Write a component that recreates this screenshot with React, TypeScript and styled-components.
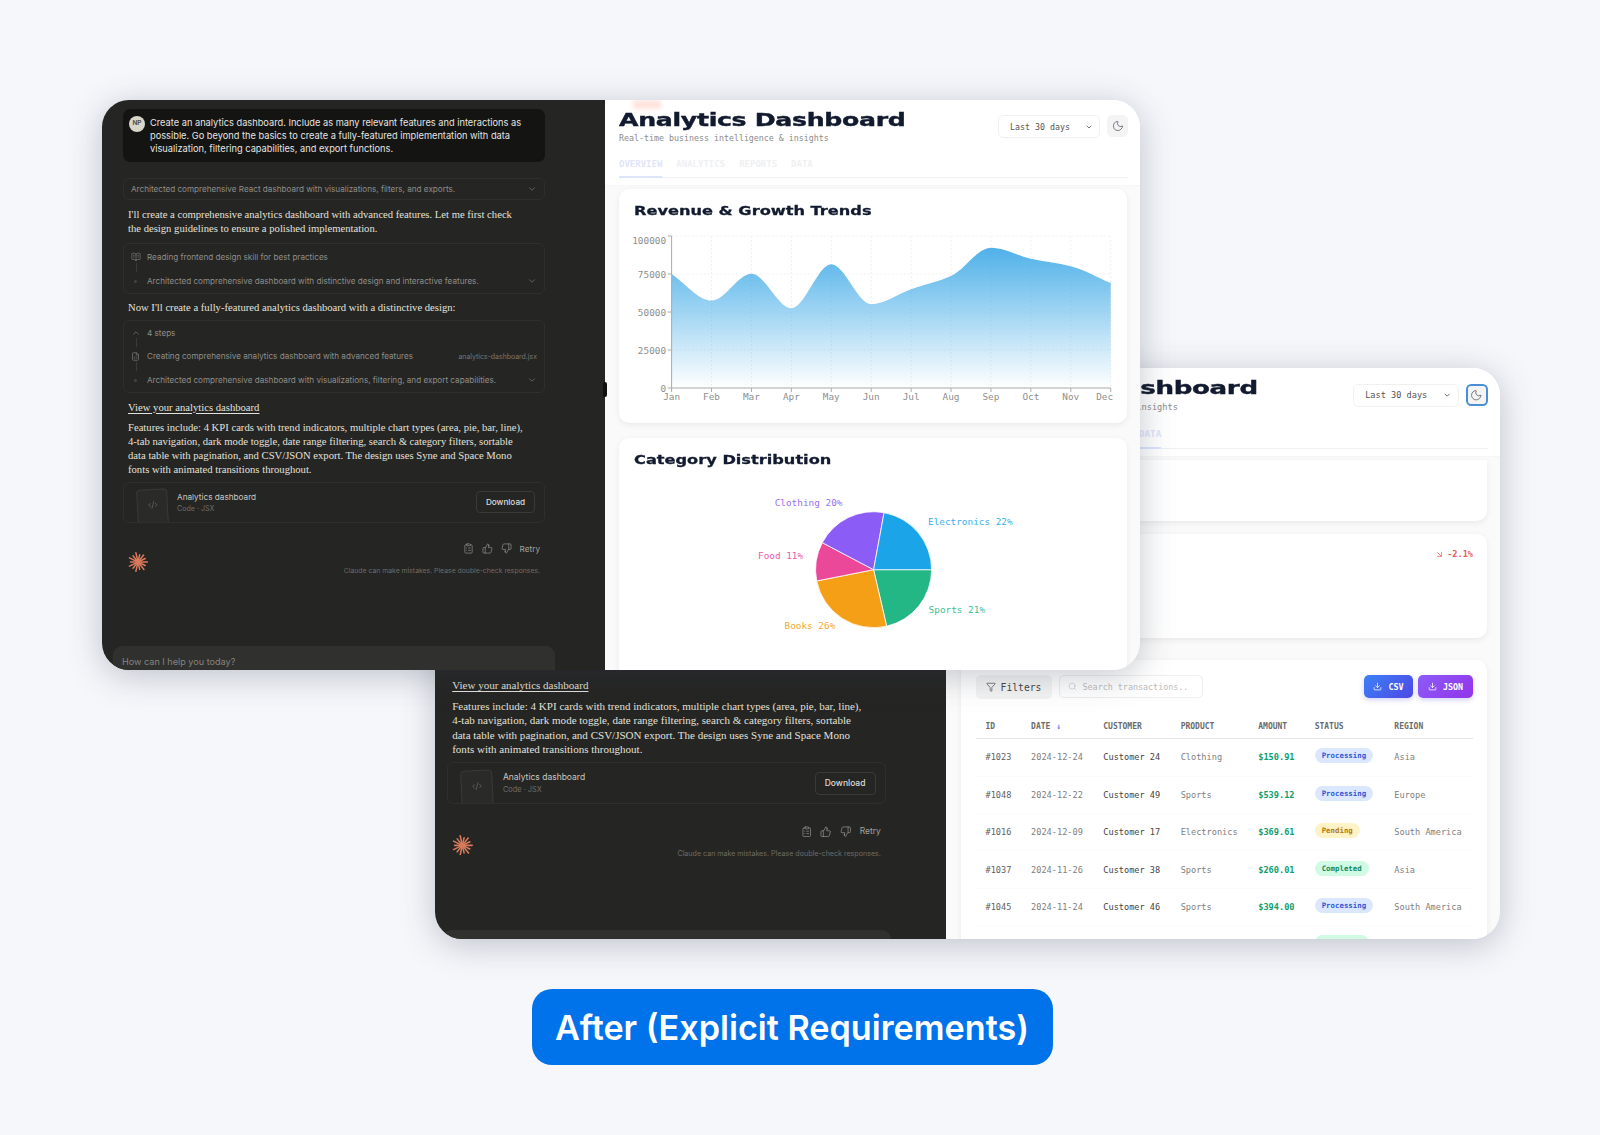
import React from 'react';
import styled, { createGlobalStyle } from 'styled-components';
import {
  ArrowDownRight,
  BookOpenText,
  ChevronDown,
  ChevronUp,
  ClipboardList,
  CodeXml,
  Download,
  FileCode,
  Filter,
  Moon,
  Search,
  ThumbsDown,
  ThumbsUp
} from 'lucide-react';

const SANS = `Inter, "Noto Sans", sans-serif`;
const SERIF = `"Liberation Serif", serif`;
const MONO = `"DejaVu Sans Mono", "Liberation Mono", monospace`;
const WIDE = `"DejaVu Sans", sans-serif`;

const GlobalStyle = createGlobalStyle`
  html, body {
    margin: 0;
    padding: 0;
    background: #f5f7fb;
  }
`;

const MONTHS = ['Jan', 'Feb', 'Mar', 'Apr', 'May', 'Jun', 'Jul', 'Aug', 'Sep', 'Oct', 'Nov', 'Dec'];
const REVENUE = [75000, 57500, 75200, 52500, 81400, 55100, 65000, 73700, 92300, 85000, 80100, 69000];
const CHART = { left: 52.6, right: 491.7, top: 11, bottom: 163 };

// same curve the chart lib draws (monotone in x)
const monotonePath = (pts: [number, number][]) => {
  const n = pts.length;
  const slopes: number[] = [];
  for (let i = 0; i < n - 1; i++) {
    slopes.push((pts[i + 1][1] - pts[i][1]) / (pts[i + 1][0] - pts[i][0]));
  }
  const tangents = pts.map((_, i) => {
    if (i === 0) return slopes[0];
    if (i === n - 1) return slopes[n - 2];
    if (slopes[i - 1] * slopes[i] <= 0) return 0;
    return (2 * slopes[i - 1] * slopes[i]) / (slopes[i - 1] + slopes[i]);
  });
  let d = `M${pts[0][0]},${pts[0][1]}`;
  for (let i = 0; i < n - 1; i++) {
    const h = (pts[i + 1][0] - pts[i][0]) / 3;
    d += `C${pts[i][0] + h},${pts[i][1] + tangents[i] * h} ${pts[i + 1][0] - h},${
      pts[i + 1][1] - tangents[i + 1] * h
    } ${pts[i + 1][0]},${pts[i + 1][1]}`;
  }
  return d;
};

const SLICES = [
  { from: 0, to: 77, color: '#22b784' },
  { from: 77, to: 168.8, color: '#f59f17' },
  { from: 168.8, to: 207.8, color: '#ec4899' },
  { from: 207.8, to: 280.4, color: '#8b5cf6' },
  { from: 280.4, to: 360, color: '#1ba4e8' }
];

const PIE_LABELS = [
  { text: 'Clothing 20%', x: 155.7, y: 38, color: '#9a70f5' },
  { text: 'Electronics 22%', x: 309, y: 57, color: '#3bb0ea' },
  { text: 'Food 11%', x: 139, y: 91, color: '#ec5ba6' },
  { text: 'Sports 21%', x: 309.6, y: 145, color: '#3cc194' },
  { text: 'Books 26%', x: 165.5, y: 161, color: '#f5a92f' }
];

const ROWS = [
  ['#1023', '2024-12-24', 'Customer 24', 'Clothing', '$150.91', 'Processing', 'Asia'],
  ['#1048', '2024-12-22', 'Customer 49', 'Sports', '$539.12', 'Processing', 'Europe'],
  ['#1016', '2024-12-09', 'Customer 17', 'Electronics', '$369.61', 'Pending', 'South America'],
  ['#1037', '2024-11-26', 'Customer 38', 'Sports', '$260.01', 'Completed', 'Asia'],
  ['#1045', '2024-11-24', 'Customer 46', 'Sports', '$394.00', 'Processing', 'South America'],
  ['#1029', '2024-11-20', 'Customer 30', 'Food', '$212.40', 'Completed', 'Europe']
];

const STAR_RAYS = [9.5, 8, 9.5, 7.5, 9.5, 8, 9.5, 7.5, 9.5, 8, 9.5, 7.5, 9, 8];

const Stage = styled.div`
  position: relative;
  width: 1600px;
  height: 1135px;
  overflow: hidden;
  padding: 989px 16px 0 0;
  box-sizing: border-box;
  display: flex;
  justify-content: center;
  align-items: flex-start;
`;

const Badge = styled.div`
  width: 521px;
  height: 76px;
  border-radius: 20px;
  background: #0073ea;
  color: #fff;
  font-family: ${SANS};
  font-weight: 600;
  font-size: 34.2px;
  display: flex;
  align-items: center;
  justify-content: center;
`;

const Window = styled.div<{ $x: number; $y: number; $w: number; $h: number; $split: number }>`
  position: absolute;
  left: ${p => p.$x}px;
  top: ${p => p.$y}px;
  width: ${p => p.$w}px;
  height: ${p => p.$h}px;
  display: grid;
  grid-template-columns: ${p => p.$split}px 1fr;
  border-radius: 27px;
  overflow: hidden;
  background: #fafafa;
  box-shadow: 0 6px 34px rgba(50, 58, 78, 0.28);
`;

const ChatPane = styled.div<{ $pad: string }>`
  background: #252523;
  padding: ${p => p.$pad};
  display: flex;
  flex-direction: column;
  overflow: hidden;
  min-height: 0;
  font-family: ${SANS};
`;

const Bubble = styled.div`
  height: 53px;
  box-sizing: border-box;
  padding: 7px 8px 0 6px;
  background: #141413;
  border-radius: 7px;
  display: flex;
  gap: 5px;
  color: #e6e5e0;
  font-size: 9.25px;
  line-height: 13.2px;
  white-space: nowrap;
`;

const Avatar = styled.div`
  width: 16px;
  height: 16px;
  flex: none;
  border-radius: 50%;
  background: #d9d6c9;
  color: #55534c;
  font-size: 6.5px;
  font-weight: 700;
  display: flex;
  align-items: center;
  justify-content: center;
`;

const Outline = styled.div<{ $mt: number }>`
  margin-top: ${p => p.$mt}px;
  flex: none;
  border: 1px solid #2f2f2d;
  border-radius: 6px;
  box-sizing: border-box;
  color: #8f8e89;
  font-size: 8.15px;
`;

const SummaryRow = styled.div`
  height: 20px;
  padding: 0 7px 0 7px;
  display: flex;
  align-items: center;
  justify-content: space-between;
`;

const ToolRow = styled.div<{ $h: number; $rail?: boolean }>`
  position: relative;
  height: ${p => p.$h}px;
  padding: 0 7px 0 7px;
  display: grid;
  grid-template-columns: 16px 1fr auto;
  align-items: center;
  white-space: nowrap;
  ${p =>
    p.$rail &&
    `&::before {
      content: '';
      position: absolute;
      left: 11.5px;
      top: -6px;
      height: 9px;
      width: 1px;
      background: #3b3b39;
    }`}
`;

const Dot = styled.span`
  width: 3px;
  height: 3px;
  margin-left: 3px;
  border-radius: 50%;
  background: #444441;
`;

const FileName = styled.span`
  font-size: 6.95px;
  color: #77766f;
`;

const Prose = styled.div<{ $mt: number }>`
  margin-top: ${p => p.$mt}px;
  flex: none;
  padding-left: 5px;
  font-family: ${SERIF};
  font-size: 10.65px;
  line-height: 14px;
  color: #e2e1dc;
  white-space: nowrap;
`;

const ViewLink = styled(Prose)`
  text-decoration: underline;
  text-underline-offset: 2px;
`;

const Tail = styled.div<{ $scale: number; $mt: number }>`
  zoom: ${p => p.$scale};
  margin-top: ${p => p.$mt}px;
  flex: none;
`;

const Artifact = styled(Outline)`
  height: 41px;
  padding: 0 9px 0 13px;
  display: flex;
  align-items: center;
  overflow: hidden;
`;

const Tile = styled.div`
  width: 31px;
  height: 38px;
  margin: 12px 9px 0 0;
  flex: none;
  border: 1px solid #3a3a38;
  border-radius: 4px;
  background: #2a2a28;
  transform: rotate(-3deg);
  color: #77766f;
  display: flex;
  justify-content: center;
  padding-top: 10px;
  box-sizing: border-box;
`;

const ArtifactName = styled.div`
  color: #c9c8c2;
  font-size: 8.2px;
  line-height: 12px;
`;

const ArtifactKind = styled.div`
  color: #6f6e69;
  font-size: 7.1px;
  line-height: 11px;
`;

const DownloadButton = styled.div`
  margin-left: auto;
  width: 59px;
  height: 22px;
  border: 1px solid #3a3a38;
  border-radius: 4px;
  box-sizing: border-box;
  color: #dedcd6;
  font-size: 8.2px;
  font-weight: 500;
  display: flex;
  align-items: center;
  justify-content: center;
`;

const Foot = styled.div`
  margin-top: 20px;
  display: flex;
  justify-content: space-between;
  padding: 0 5px;
`;

const Spark = styled.svg`
  margin-top: 9px;
  flex: none;
`;

const FootRight = styled.div`
  display: flex;
  flex-direction: column;
  align-items: flex-end;
`;

const Actions = styled.div`
  height: 12px;
  display: flex;
  align-items: center;
  gap: 8px;
  color: #a3a29c;
  font-size: 8.2px;
`;

const Disclaimer = styled.div`
  margin-top: 11px;
  line-height: 10px;
  font-size: 6.85px;
  color: #6d6c67;
`;

const Composer = styled.div<{ $h: number; $mx: number }>`
  margin: auto -${p => p.$mx}px 0 -${p => p.$mx}px;
  height: ${p => p.$h}px;
  flex: none;
  overflow: hidden;
  box-sizing: border-box;
  padding: 9px 0 0 9px;
  background: #30302e;
  border-radius: 9px 9px 0 0;
  color: #85847e;
  font-size: 9.1px;
  line-height: 14px;
`;

const MainPane = styled.div`
  position: relative;
  display: flex;
  flex-direction: column;
  min-width: 0;
  overflow: hidden;
`;

const Smudge = styled.div`
  position: absolute;
  left: 28px;
  top: 0;
  width: 28px;
  height: 9px;
  background: #ffe4dd;
  filter: blur(2px);
`;

const Handle = styled.div`
  position: absolute;
  left: 501px;
  top: 282px;
  width: 4px;
  height: 15px;
  border-radius: 2px;
  background: #111;
`;

const Header = styled.header<{ $scale: number }>`
  zoom: ${p => p.$scale};
  height: 86px;
  flex: none;
  box-sizing: border-box;
  padding: 10px 12px 0 14px;
  background: #fff;
  border-bottom: 1px solid #f6f6f6;
`;

const HeaderTop = styled.div`
  display: flex;
  justify-content: space-between;
  align-items: flex-start;
`;

const Title = styled.h1`
  margin: 0;
  font-family: ${WIDE};
  font-weight: 700;
  font-size: 17px;
  line-height: 20px;
  letter-spacing: -0.2px;
  color: #111a2e;
  white-space: nowrap;
  transform: scaleX(1.48);
  transform-origin: left center;
  -webkit-text-stroke: 0.4px #111a2e;
`;

const Subtitle = styled.div`
  margin-top: 2px;
  font-family: ${MONO};
  font-size: 8.3px;
  line-height: 12px;
  color: #8b8b8b;
  white-space: nowrap;
`;

const Controls = styled.div`
  margin-top: 5px;
  display: flex;
  gap: 7px;
`;

const RangeSelect = styled.div`
  width: 102px;
  height: 23px;
  box-sizing: border-box;
  padding: 0 6px 0 11px;
  border: 1px solid #f0f0f0;
  border-radius: 5px;
  display: flex;
  align-items: center;
  justify-content: space-between;
  font-family: ${MONO};
  font-size: 8.3px;
  color: #555;
`;

const ThemeToggle = styled.div<{ $focused?: boolean }>`
  width: 21px;
  height: 22px;
  box-sizing: border-box;
  border-radius: 5px;
  background: #f4f4f5;
  border: ${p => (p.$focused ? '2px solid #4a8fd6' : '1px solid #f4f4f5')};
  color: #555a66;
  display: flex;
  align-items: center;
  justify-content: center;
`;

const Tabs = styled.nav`
  margin-top: 14px;
  display: flex;
  gap: 14px;
  border-bottom: 1px solid #eeeff2;
`;

const Tab = styled.div<{ $active?: boolean }>`
  height: 20px;
  font-family: ${MONO};
  font-weight: 700;
  font-size: 9px;
  line-height: 12px;
  color: ${p => (p.$active ? '#dfe5fb' : '#eff0f2')};
  box-sizing: border-box;
  border-bottom: ${p => (p.$active ? '2px solid #dde5fb' : '2px solid transparent')};
  margin-bottom: -1px;
`;

const Body = styled.div<{ $left: number }>`
  padding: 3px 13px 0 ${p => p.$left}px;
  display: flex;
  flex-direction: column;
  min-height: 0;
`;

const Card = styled.section<{ $mt?: number; $h?: number; $flat?: boolean }>`
  margin-top: ${p => p.$mt ?? 0}px;
  height: ${p => (p.$h ? `${p.$h}px` : 'auto')};
  flex: none;
  box-sizing: border-box;
  background: #fff;
  border-radius: ${p => (p.$flat ? '0 0 10px 10px' : '10px')};
  box-shadow: 0 2px 6px rgba(0, 0, 0, 0.07);
`;

const ChartCard = styled(Card)`
  padding: 14px 0 13px 15px;
`;

const CardTitle = styled.h2`
  margin: 0;
  font-family: ${WIDE};
  font-weight: 700;
  font-size: 13px;
  line-height: 16px;
  color: #111a2e;
  white-space: nowrap;
  transform: scaleX(1.245);
  transform-origin: left center;
  -webkit-text-stroke: 0.3px #111a2e;
`;

const Plot = styled.svg<{ $mt: number }>`
  display: block;
  margin: ${p => p.$mt}px 0 0 -15px;
  font-family: ${MONO};
  font-size: 9.4px;
`;

const TrendCard = styled(Card)`
  padding: 15px 14px 0 0;
  display: flex;
  justify-content: flex-end;
`;

const Trend = styled.div`
  display: flex;
  align-items: center;
  gap: 3px;
  height: 10px;
  font-family: ${MONO};
  font-weight: 700;
  font-size: 8.6px;
  color: #ea5a5a;
`;

const TableCard = styled(Card)`
  padding: 15px 14px 0 15px;
  font-family: ${MONO};
`;

const Toolbar = styled.div`
  display: flex;
  align-items: flex-start;
  gap: 7px;
`;

const FilterButton = styled.div`
  width: 76px;
  height: 24px;
  border-radius: 5px;
  background: #f4f4f4;
  display: flex;
  align-items: center;
  justify-content: center;
  gap: 5px;
  font-size: 9.7px;
  color: #444;
`;

const SearchBox = styled.div`
  width: 144px;
  height: 23px;
  box-sizing: border-box;
  border: 1px solid #eee;
  border-radius: 5px;
  padding-left: 8px;
  display: flex;
  align-items: center;
  gap: 6px;
  font-size: 8.4px;
  color: #bdbdbd;
  white-space: nowrap;
`;

const ExportGroup = styled.div`
  margin-left: auto;
  display: flex;
  gap: 5px;
`;

const ExportButton = styled.div<{ $from: string; $to: string; $w: number }>`
  width: ${p => p.$w}px;
  height: 23px;
  border-radius: 5px;
  background: linear-gradient(135deg, ${p => p.$from}, ${p => p.$to});
  box-shadow: 0 2px 5px rgba(80, 70, 220, 0.25);
  color: #fff;
  font-size: 8.4px;
  font-weight: 700;
  display: flex;
  align-items: center;
  justify-content: center;
  gap: 6px;
`;

const TableHead = styled.div`
  margin-top: 17px;
  height: 23px;
  box-sizing: border-box;
  padding: 0 0 1px 10px;
  display: grid;
  grid-template-columns: 45.6px 72.2px 77.4px 77.6px 56.4px 79.7px 1fr;
  align-items: center;
  border-bottom: 1px solid #e6e6e6;
  font-weight: 700;
  font-size: 8px;
  color: #6b6b6b;
`;

const SortMark = styled.span`
  margin-left: 6px;
  color: #4a7de8;
`;

const TableRow = styled.div`
  height: 37.4px;
  box-sizing: border-box;
  padding-left: 10px;
  display: grid;
  grid-template-columns: 45.6px 72.2px 77.4px 77.6px 56.4px 79.7px 1fr;
  align-items: center;
  border-bottom: 1px solid #fbfbfb;
  font-size: 8.6px;
  color: #808080;
  white-space: nowrap;
`;

const CellStrong = styled.div`
  color: #444;
`;

const CellId = styled.div`
  color: #5e5e5e;
`;

const CellAmount = styled.div`
  color: #0f9f6e;
  font-weight: 700;
`;

const STATUS: Record<string, { bg: string; fg: string }> = {
  Processing: { bg: '#dbe7fe', fg: '#3159d6' },
  Pending: { bg: '#fef3c7', fg: '#b47a10' },
  Completed: { bg: '#d1fae5', fg: '#0f8a5f' }
};

const Status = styled.span<{ $kind: string }>`
  justify-self: start;
  margin-top: -3px;
  height: 15px;
  padding: 0 7px;
  border-radius: 8px;
  background: ${p => STATUS[p.$kind].bg};
  color: ${p => STATUS[p.$kind].fg};
  font-size: 7.4px;
  font-weight: 700;
  line-height: 15px;
`;

const Sparkle = () => (
  <Spark width="20" height="20" viewBox="-10 -10 20 20">
    {STAR_RAYS.map((len, i) => {
      const a = (i / STAR_RAYS.length) * Math.PI * 2;
      return (
        <line
          key={i}
          x1="0"
          y1="0"
          x2={Math.cos(a) * len}
          y2={Math.sin(a) * len}
          stroke="#d97a5c"
          strokeWidth="1.5"
          strokeLinecap="round"
        />
      );
    })}
  </Spark>
);

const ChatEnd = ({ scale, top }: { scale: number; top: number }) => (
  <Tail $scale={scale} $mt={top}>
    <ViewLink $mt={0}>View your analytics dashboard</ViewLink>
    <Prose $mt={6}>
      Features include: 4 KPI cards with trend indicators, multiple chart types (area, pie, bar, line),
      <br />
      4-tab navigation, dark mode toggle, date range filtering, search &amp; category filters, sortable
      <br />
      data table with pagination, and CSV/JSON export. The design uses Syne and Space Mono
      <br />
      fonts with animated transitions throughout.
    </Prose>
    <Artifact $mt={5}>
      <Tile>
        <CodeXml size={10} strokeWidth={1.4} />
      </Tile>
      <div>
        <ArtifactName>Analytics dashboard</ArtifactName>
        <ArtifactKind>Code · JSX</ArtifactKind>
      </div>
      <DownloadButton>Download</DownloadButton>
    </Artifact>
    <Foot>
      <Sparkle />
      <FootRight>
        <Actions>
          <ClipboardList size={11} strokeWidth={1.3} />
          <ThumbsUp size={11} strokeWidth={1.3} />
          <ThumbsDown size={11} strokeWidth={1.3} />
          <span>Retry</span>
        </Actions>
        <Disclaimer>Claude can make mistakes. Please double-check responses.</Disclaimer>
      </FootRight>
    </Foot>
  </Tail>
);

const DashboardHeader = ({ scale, focused }: { scale: number; focused?: boolean }) => (
  <Header $scale={scale}>
    <HeaderTop>
      <div>
        <Title>Analytics Dashboard</Title>
        <Subtitle>Real-time business intelligence &amp; insights</Subtitle>
      </div>
      <Controls>
        <RangeSelect>
          Last 30 days
          <ChevronDown size={8} strokeWidth={2.4} />
        </RangeSelect>
        <ThemeToggle $focused={focused}>
          <Moon size={12} strokeWidth={1.5} />
        </ThemeToggle>
      </Controls>
    </HeaderTop>
    <Tabs>
      <Tab $active>OVERVIEW</Tab>
      <Tab>ANALYTICS</Tab>
      <Tab>REPORTS</Tab>
      <Tab $active={focused}>DATA</Tab>
    </Tabs>
  </Header>
);

const RevenueChart = () => {
  const step = (CHART.right - CHART.left) / 11;
  const scaleY = (v: number) => CHART.bottom - (v / 100000) * (CHART.bottom - CHART.top);
  const pts = REVENUE.map((v, i): [number, number] => [CHART.left + i * step, scaleY(v)]);
  const line = monotonePath(pts);
  const ticks = [100000, 75000, 50000, 25000, 0];
  return (
    <Plot $mt={6} width="508" height="185" viewBox="0 0 508 185">
      <defs>
        <linearGradient id="revenueFill" x1="0" y1="0" x2="0" y2="1">
          <stop offset="0" stopColor="#37a6e6" stopOpacity="0.88" />
          <stop offset="1" stopColor="#37a6e6" stopOpacity="0" />
        </linearGradient>
      </defs>
      {ticks.map(t => (
        <line key={t} x1={CHART.left} x2={CHART.right} y1={scaleY(t)} y2={scaleY(t)} stroke="#f0f0f0" strokeDasharray="2 2" />
      ))}
      {pts.map(([x], i) => (
        <line key={i} x1={x} x2={x} y1={CHART.top} y2={CHART.bottom} stroke="#f0f0f0" strokeDasharray="2 2" />
      ))}
      <path d={`${line}L${CHART.right},${CHART.bottom}L${CHART.left},${CHART.bottom}Z`} fill="url(#revenueFill)" />
      <path
        d={`M${CHART.left},${CHART.top}V${CHART.bottom}H${CHART.right}`}
        fill="none"
        stroke="#ababab"
      />
      {ticks.map(t => (
        <g key={t}>
          <line x1={CHART.left - 4} x2={CHART.left} y1={scaleY(t)} y2={scaleY(t)} stroke="#ababab" />
          <text x={CHART.left - 5.5} y={t === 100000 ? scaleY(t) + 8 : scaleY(t) + 3.5} textAnchor="end" fill="#8e8e8e">
            {t}
          </text>
        </g>
      ))}
      {MONTHS.map((m, i) => (
        <g key={m}>
          <line x1={pts[i][0]} x2={pts[i][0]} y1={CHART.bottom} y2={CHART.bottom + 4} stroke="#ababab" />
          <text x={i === 11 ? pts[i][0] - 6 : pts[i][0]} y={CHART.bottom + 12} textAnchor="middle" fill="#8e8e8e">
            {m}
          </text>
        </g>
      ))}
    </Plot>
  );
};

const CategoryPie = () => {
  const cx = 254.6;
  const cy = 101.7;
  const r = 58;
  const at = (deg: number) => {
    const a = (deg * Math.PI) / 180;
    return `${cx + r * Math.cos(a)},${cy + r * Math.sin(a)}`;
  };
  return (
    <Plot $mt={0} width="508" height="210" viewBox="0 0 508 210">
      {SLICES.map(s => (
        <path
          key={s.from}
          d={`M${cx},${cy}L${at(s.from)}A${r},${r} 0 ${s.to - s.from > 180 ? 1 : 0} 1 ${at(s.to)}Z`}
          fill={s.color}
          stroke="#fff"
          strokeWidth="0.8"
        />
      ))}
      {PIE_LABELS.map(l => (
        <text key={l.text} x={l.x} y={l.y} fill={l.color}>
          {l.text}
        </text>
      ))}
    </Plot>
  );
};

export default function App() {
  return (
    <Stage>
      <GlobalStyle />
      <Window $x={435} $y={368} $w={1065} $h={571} $split={511}>
        <ChatPane $pad="310px 60px 0 12px">
          <ChatEnd scale={1.037} top={0} />
          <Composer $h={7} $mx={5}>
            How can I help you today?
          </Composer>
        </ChatPane>
        <MainPane>
          <DashboardHeader scale={1.037} focused />
          <Body $left={14.5}>
            <Card $h={61} $flat />
            <TrendCard $mt={13} $h={104}>
              <Trend>
                <ArrowDownRight size={9} strokeWidth={2} />
                -2.1%
              </Trend>
            </TrendCard>
            <TableCard $mt={22} $h={300}>
              <Toolbar>
                <FilterButton>
                  <Filter size={10} strokeWidth={1.6} />
                  Filters
                </FilterButton>
                <SearchBox>
                  <Search size={9} strokeWidth={1.4} />
                  Search transactions..
                </SearchBox>
                <ExportGroup>
                  <ExportButton $from="#3b82f6" $to="#4f46e5" $w={49}>
                    <Download size={9} />
                    CSV
                  </ExportButton>
                  <ExportButton $from="#8b5cf6" $to="#9333ea" $w={55}>
                    <Download size={9} />
                    JSON
                  </ExportButton>
                </ExportGroup>
              </Toolbar>
              <TableHead>
                <div>ID</div>
                <div>
                  DATE<SortMark>↓</SortMark>
                </div>
                <div>CUSTOMER</div>
                <div>PRODUCT</div>
                <div>AMOUNT</div>
                <div>STATUS</div>
                <div>REGION</div>
              </TableHead>
              {ROWS.map(r => (
                <TableRow key={r[0]}>
                  <CellId>{r[0]}</CellId>
                  <div>{r[1]}</div>
                  <CellStrong>{r[2]}</CellStrong>
                  <div>{r[3]}</div>
                  <CellAmount>{r[4]}</CellAmount>
                  <Status $kind={r[5]}>{r[5]}</Status>
                  <div>{r[6]}</div>
                </TableRow>
              ))}
            </TableCard>
          </Body>
        </MainPane>
      </Window>

      <Window $x={102} $y={100} $w={1038} $h={570} $split={503}>
        <ChatPane $pad="9px 60px 0 21px">
          <Bubble>
            <Avatar>NP</Avatar>
            <div>
              Create an analytics dashboard. Include as many relevant features and interactions as
              <br />
              possible. Go beyond the basics to create a fully-featured implementation with data
              <br />
              visualization, filtering capabilities, and export functions.
            </div>
          </Bubble>
          <Outline $mt={16}>
            <SummaryRow>
              Architected comprehensive React dashboard with visualizations, filters, and exports.
              <ChevronDown size={10} strokeWidth={1.4} />
            </SummaryRow>
          </Outline>
          <Prose $mt={8}>
            I'll create a comprehensive analytics dashboard with advanced features. Let me first check
            <br />
            the design guidelines to ensure a polished implementation.
          </Prose>
          <Outline $mt={7}>
            <ToolRow $h={25}>
              <BookOpenText size={10} strokeWidth={1.3} />
              Reading frontend design skill for best practices
            </ToolRow>
            <ToolRow $h={24} $rail>
              <Dot />
              Architected comprehensive dashboard with distinctive design and interactive features.
              <ChevronDown size={10} strokeWidth={1.4} />
            </ToolRow>
          </Outline>
          <Prose $mt={7}>Now I'll create a fully-featured analytics dashboard with a distinctive design:</Prose>
          <Outline $mt={5}>
            <ToolRow $h={23}>
              <ChevronUp size={10} strokeWidth={1.4} />
              4 steps
            </ToolRow>
            <ToolRow $h={24} $rail>
              <FileCode size={9} strokeWidth={1.5} />
              Creating comprehensive analytics dashboard with advanced features
              <FileName>analytics-dashboard.jsx</FileName>
            </ToolRow>
            <ToolRow $h={24} $rail>
              <Dot />
              Architected comprehensive dashboard with visualizations, filtering, and export capabilities.
              <ChevronDown size={10} strokeWidth={1.4} />
            </ToolRow>
          </Outline>
          <ChatEnd scale={1} top={7.5} />
          <Composer $h={24} $mx={10}>
            How can I help you today?
          </Composer>
        </ChatPane>
        <MainPane>
          <Smudge />
          <DashboardHeader scale={1} />
          <Body $left={14}>
            <ChartCard>
              <CardTitle>Revenue &amp; Growth Trends</CardTitle>
              <RevenueChart />
            </ChartCard>
            <ChartCard $mt={15} $h={260}>
              <CardTitle>Category Distribution</CardTitle>
              <CategoryPie />
            </ChartCard>
          </Body>
        </MainPane>
        <Handle />
      </Window>

      <Badge>After (Explicit Requirements)</Badge>
    </Stage>
  );
}
